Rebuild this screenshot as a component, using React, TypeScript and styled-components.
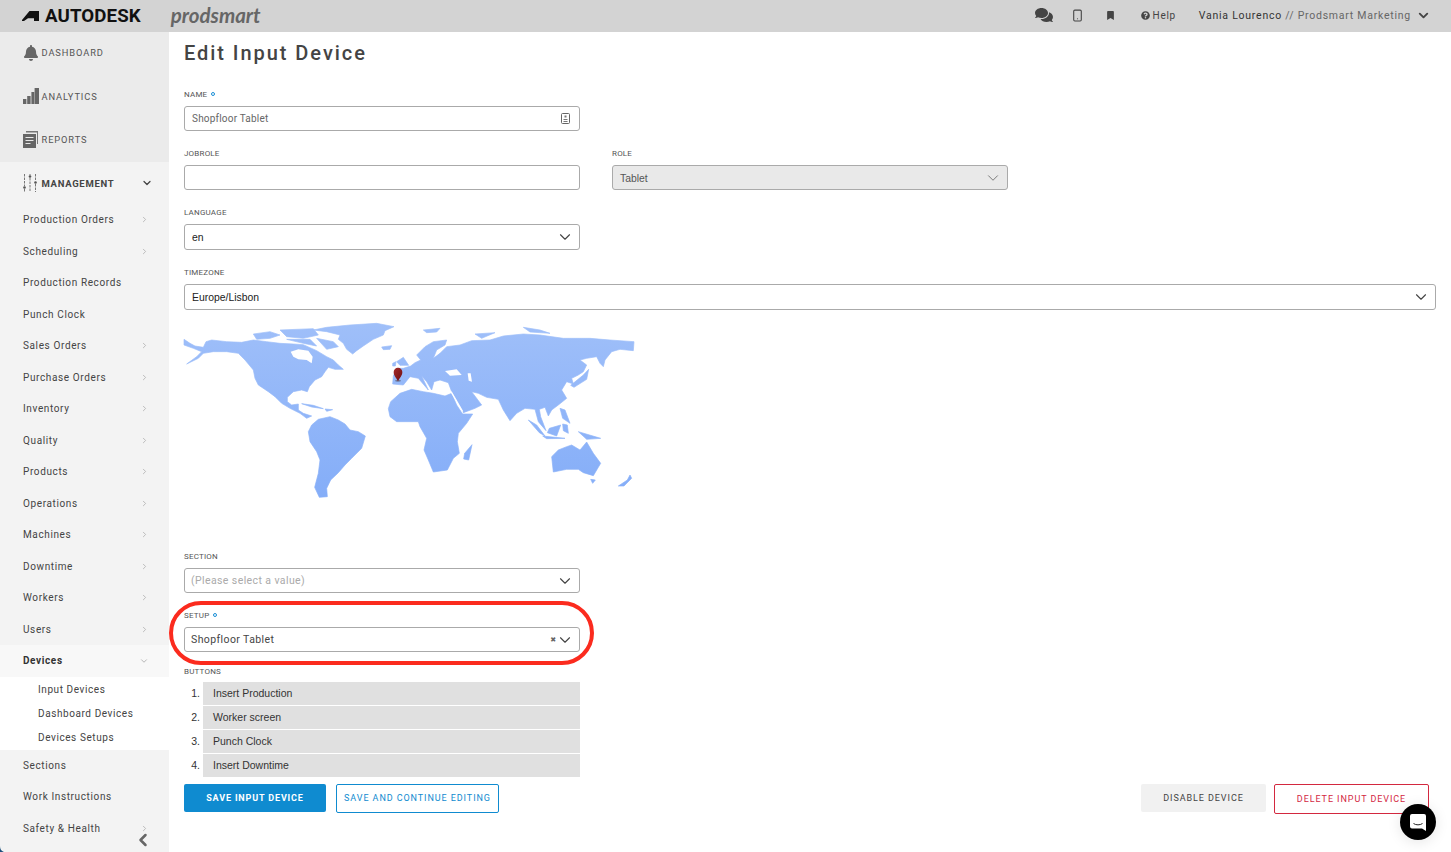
import React from "react";
import styled, { createGlobalStyle } from "styled-components";
import { FaBell, FaBookmark, FaComments, FaQuestionCircle } from "react-icons/fa";
import { FiChevronDown, FiChevronLeft, FiChevronRight, FiSmartphone } from "react-icons/fi";

const uiFont = `Roboto, "Noto Sans", sans-serif`;
const plainFont = `"Liberation Sans", Arial, sans-serif`;

const GlobalStyle = createGlobalStyle`
  html, body {
    margin: 0;
    height: 852px;
    overflow: hidden;
    background: #fff;
  }
  * { box-sizing: border-box; }
`;

const managementItems = [
  { label: "Production Orders", arrow: true },
  { label: "Scheduling", arrow: true },
  { label: "Production Records", arrow: false },
  { label: "Punch Clock", arrow: false },
  { label: "Sales Orders", arrow: true },
  { label: "Purchase Orders", arrow: true },
  { label: "Inventory", arrow: true },
  { label: "Quality", arrow: true },
  { label: "Products", arrow: true },
  { label: "Operations", arrow: true },
  { label: "Machines", arrow: true },
  { label: "Downtime", arrow: true },
  { label: "Workers", arrow: true },
  { label: "Users", arrow: true },
];

const deviceItems = ["Input Devices", "Dashboard Devices", "Devices Setups"];
const buttonItems = ["Insert Production", "Worker screen", "Punch Clock", "Insert Downtime"];

const AutodeskMark = () => (
  <svg width="17" height="10" viewBox="0 0 17 10">
    <path d="M0 10 L0 9 L7.5 0 L17 0 L17 10 L12 10 L12 7.2 L6 7.2 L2 10 Z" fill="#111" />
  </svg>
);

const BarsIcon = () => (
  <svg width="16" height="16" viewBox="0 0 16 16">
    <path d="M0 11h3.4v5H0zM4.2 8h3.4v8H4.2zM8.4 4h2.8v12H8.4zM11.6 0H16v16h-4.4z" fill="#666" />
  </svg>
);

const ReportsIcon = () => (
  <svg width="15" height="17" viewBox="0 0 15 17">
    <path d="M3 0h12v13h-1V1.5H3z" fill="#777" />
    <path d="M0 3h13v14H0z" fill="#666" />
    <path d="M2.5 6.5h8M2.5 9.5h8M2.5 12.5h5" stroke="#e8e8e8" strokeWidth="1.2" />
  </svg>
);

const SlidersIcon = () => (
  <svg width="14" height="18" viewBox="0 0 14 18">
    <path d="M1.5 0v12M1.5 15v3" stroke="#777" strokeWidth="1" strokeDasharray="2.5 1" />
    <path d="M7 0v1M7 4v14" stroke="#777" strokeWidth="1" strokeDasharray="2.5 1" />
    <path d="M12.5 0v7M12.5 10v8" stroke="#777" strokeWidth="1" strokeDasharray="2.5 1" />
    <circle cx="1.5" cy="13.5" r="1.3" fill="#555" />
    <circle cx="7" cy="2.5" r="1.3" fill="#555" />
    <circle cx="12.5" cy="8.5" r="1.3" fill="#555" />
  </svg>
);

const TabletGlyph = () => (
  <svg width="9" height="11" viewBox="0 0 9 11">
    <rect x="0.5" y="0.5" width="8" height="10" rx="1" fill="none" stroke="#666" />
    <path d="M3.5 2.5h2v2h-2zM2.5 6h4v1h-4zM2.5 8h4v1h-4z" fill="#777" />
  </svg>
);

const ChatGlyph = () => (
  <svg width="16" height="17" viewBox="0 0 16 17">
    <path d="M2 0h12a2 2 0 0 1 2 2v15l-4-2.6H2a2 2 0 0 1-2-2V2a2 2 0 0 1 2-2z" fill="#fff" />
    <path d="M3.5 9.5c2.5 1.8 6.5 1.8 9 0" fill="none" stroke="#222" strokeWidth="1" />
  </svg>
);

const landPaths = [
  // north america
  "M42 88 L60 100 L75 108 L100 112 L108 95 L125 90 L170 95 L215 97 L250 90 L290 95 L330 100 L370 102 L400 104 L440 122 L470 140 L490 150 L505 165 L520 178 L495 178 L475 172 L465 185 L455 200 L435 210 L418 230 L412 245 L395 240 L370 245 L352 262 L352 275 L365 285 L385 282 L385 300 L400 310 L425 318 L410 325 L390 310 L360 295 L335 280 L315 260 L295 245 L265 225 L255 205 L250 180 L225 150 L205 130 L170 125 L130 125 L100 130 L85 145 L50 162 L80 140 L95 125 L70 115 L42 105 Z",
  // arctic islands
  "M250 72 L300 65 L330 75 L300 85 L260 88 Z",
  "M330 60 L430 56 L445 75 L400 85 L350 80 Z",
  "M350 88 L420 88 L440 108 L400 100 Z",
  "M440 85 L490 95 L505 110 L470 118 Z",
  // greenland, iceland
  "M430 60 L470 52 L540 45 L620 40 L672 50 L645 62 L640 75 L610 88 L580 108 L560 122 L548 132 L530 118 L520 100 L505 88 L510 75 L470 65 Z",
  "M635 111 L665 107 L660 118 L640 119 Z",
  // caribbean
  "M395 281 L430 286 L460 296 L425 291 Z",
  "M465 297 L488 299 L470 304 Z",
  // south america
  "M415 365 L425 345 L445 328 L480 320 L505 330 L525 342 L540 360 L565 365 L586 378 L575 415 L545 445 L525 465 L505 488 L482 510 L470 535 L472 560 L448 562 L434 532 L445 490 L450 450 L440 425 L420 395 Z",
  // africa
  "M655 296 L662 275 L690 250 L725 238 L760 245 L790 250 L825 258 L845 250 L860 285 L878 312 L908 312 L890 340 L865 370 L862 395 L868 430 L850 445 L832 480 L790 486 L775 450 L762 420 L770 385 L750 350 L745 335 L705 335 L680 335 L660 320 Z",
  // eurasia
  "M668 222 L670 198 L680 175 L700 175 L722 168 L735 158 L752 150 L740 135 L765 110 L790 95 L830 90 L825 105 L800 120 L790 145 L810 130 L830 110 L870 105 L905 92 L960 90 L1000 78 L1060 72 L1110 75 L1180 85 L1260 85 L1320 90 L1392 95 L1390 122 L1350 118 L1325 125 L1305 150 L1300 170 L1290 160 L1280 140 L1250 145 L1230 150 L1250 165 L1240 185 L1225 195 L1205 205 L1210 222 L1190 215 L1175 240 L1190 265 L1165 285 L1145 300 L1135 318 L1125 292 L1108 298 L1112 320 L1128 362 L1105 335 L1095 298 L1065 295 L1040 310 L1020 332 L1000 300 L985 268 L950 262 L925 250 L905 245 L935 285 L915 295 L880 308 L860 270 L845 245 L835 218 L810 210 L792 215 L785 240 L770 215 L755 198 L775 240 L745 205 L720 200 L700 225 Z",
  "M680 155 L700 142 L716 166 L690 166 Z",
  "M668 160 L678 155 L676 168 L668 168 Z",
  "M760 60 L810 55 L800 66 L770 68 Z",
  "M915 72 L975 68 L935 85 Z",
  "M1060 52 L1110 60 L1140 70 L1080 66 Z",
  // japan and south east asia
  "M1240 195 L1256 178 L1250 208 L1212 232 L1202 226 Z",
  "M1075 330 L1100 345 L1125 378 L1108 368 Z",
  "M1138 355 L1172 345 L1160 378 L1132 368 Z",
  "M1118 378 L1185 385 L1130 386 Z",
  "M1178 342 L1192 345 L1195 370 L1180 362 Z",
  "M1170 295 L1185 300 L1200 340 L1178 325 Z",
  "M1225 365 L1292 385 L1250 388 Z",
  // australia, new zealand, madagascar
  "M1145 440 L1165 420 L1190 410 L1205 405 L1230 420 L1250 396 L1270 430 L1292 460 L1270 497 L1240 488 L1225 478 L1190 478 L1150 486 Z",
  "M1262 508 L1276 510 L1268 520 Z",
  "M1345 528 L1372 510 L1380 495 L1385 505 L1362 528 Z",
  "M884 430 L906 404 L896 450 L881 447 Z",
];

const WorldMap = () => (
  <svg width="480" height="200" viewBox="0 0 1440 600">
    <defs>
      <linearGradient id="land" gradientUnits="userSpaceOnUse" x1="0" y1="40" x2="0" y2="565">
        <stop offset="0" stopColor="#9fbff9" />
        <stop offset="1" stopColor="#84adf8" />
      </linearGradient>
      <linearGradient id="pin" x1="0" y1="0" x2="1" y2="1">
        <stop offset="0" stopColor="#a52a2a" />
        <stop offset="1" stopColor="#6e0f12" />
      </linearGradient>
    </defs>
    <g fill="url(#land)" stroke="url(#land)" strokeWidth="2" strokeLinejoin="round">
      {landPaths.map((d) => (
        <path key={d} d={d} />
      ))}
    </g>
    {/* hudson bay, black sea, caspian, red sea */}
    <g fill="#fff">
      <path d="M362 125 L385 118 L415 122 L428 140 L425 160 L410 150 L385 148 L370 140 Z" />
      <path d="M825 183 L860 178 L875 195 L840 197 Z" />
      <path d="M893 190 L902 190 L906 215 L896 212 Z" />
    </g>
    <path d="M843 245 L878 305" stroke="#fff" strokeWidth="4" />
    <ellipse cx="684" cy="212" rx="9" ry="3" fill="#556" opacity="0.6" />
    <path d="M684 214 C680 204 671 198 671 186 A13 13 0 0 1 697 186 C697 198 688 204 684 214 Z" fill="url(#pin)" />
  </svg>
);

const App: React.FC = () => {
  return (
    <Page>
      <GlobalStyle />
      <TopBar>
        <Brand>
          <AutodeskMark />
          <AutodeskName>AUTODESK</AutodeskName>
          <ProdsmartName>prodsmart</ProdsmartName>
        </Brand>
        <TopActions>
          <TopIcon $width={33}><FaComments size={18} /></TopIcon>
          <TopIcon $width={33}><FiSmartphone size={13} /></TopIcon>
          <TopIcon $width={33}><FaBookmark size={9} /></TopIcon>
          <HelpLink><FaQuestionCircle size={9} />Help</HelpLink>
          <UserName>Vania Lourenco <UserOrg>// Prodsmart Marketing</UserOrg></UserName>
          <FiChevronDown size={15} strokeWidth={3} color="#444" />
        </TopActions>
      </TopBar>
      <Body>
        <Sidebar>
          <PrimaryGroup>
            <PrimaryRow>
              <PrimaryIcon><FaBell size={16} color="#666" /></PrimaryIcon>
              DASHBOARD
            </PrimaryRow>
            <PrimaryRow>
              <PrimaryIcon><BarsIcon /></PrimaryIcon>
              ANALYTICS
            </PrimaryRow>
            <PrimaryRow>
              <PrimaryIcon><ReportsIcon /></PrimaryIcon>
              REPORTS
            </PrimaryRow>
          </PrimaryGroup>
          <ManagementHeader>
            <PrimaryIcon><SlidersIcon /></PrimaryIcon>
            MANAGEMENT
            <HeaderChevron><FiChevronDown size={12} strokeWidth={2.5} /></HeaderChevron>
          </ManagementHeader>
          {managementItems.map((item) => (
            <NavRow key={item.label}>
              {item.label}
              {item.arrow && <RowArrow><FiChevronRight size={9} /></RowArrow>}
            </NavRow>
          ))}
          <DevicesRow>
            Devices
            <RowArrow><FiChevronDown size={10} /></RowArrow>
          </DevicesRow>
          <SubMenu>
            {deviceItems.map((item) => (
              <SubRow key={item}>{item}</SubRow>
            ))}
          </SubMenu>
          <NavRow>Sections</NavRow>
          <NavRow>Work Instructions</NavRow>
          <NavRow>
            Safety &amp; Health
            <RowArrow><FiChevronRight size={9} /></RowArrow>
          </NavRow>
          <CollapseToggle><FiChevronLeft size={20} strokeWidth={3} /></CollapseToggle>
        </Sidebar>
        <Main>
          <Title>Edit Input Device</Title>
          <Field $top={24}>
            <Label>NAME <RequiredDot /></Label>
            <Box $half>
              <NameValue>Shopfloor Tablet</NameValue>
              <TabletGlyph />
              <GlyphGap />
            </Box>
          </Field>
          <TwoColumns>
            <Field>
              <Label>JOBROLE</Label>
              <Box $half />
            </Field>
            <Field>
              <Label>ROLE</Label>
              <Box $half $disabled>
                <PlainValue $muted>Tablet</PlainValue>
                <FiChevronDown size={18} strokeWidth={1.3} color="#777" />
              </Box>
            </Field>
          </TwoColumns>
          <Field>
            <Label>LANGUAGE</Label>
            <Box $half $tall>
              <PlainValue>en</PlainValue>
              <FiChevronDown size={18} strokeWidth={1.5} color="#444" />
            </Box>
          </Field>
          <Field>
            <Label>TIMEZONE</Label>
            <Box $tall>
              <PlainValue>Europe/Lisbon</PlainValue>
              <FiChevronDown size={18} strokeWidth={1.5} color="#444" />
            </Box>
          </Field>
          <MapFrame><WorldMap /></MapFrame>
          <Field $top={40}>
            <Label>SECTION</Label>
            <Box $half>
              <SelectValue $placeholder>(Please select a value)</SelectValue>
              <FiChevronDown size={18} strokeWidth={1.5} color="#444" />
            </Box>
          </Field>
          <Field>
            <Label>SETUP <RequiredDot /></Label>
            <Box $half>
              <SelectValue>Shopfloor Tablet</SelectValue>
              <ClearMark>✖</ClearMark>
              <FiChevronDown size={18} strokeWidth={1.5} color="#444" />
            </Box>
          </Field>
          <ButtonsLabel>BUTTONS</ButtonsLabel>
          <ButtonList>
            {buttonItems.map((item, index) => (
              <ButtonRow key={item}>
                <ButtonIndex>{index + 1}.</ButtonIndex>
                <ButtonName>{item}</ButtonName>
              </ButtonRow>
            ))}
          </ButtonList>
          <Actions>
            <ActionGroup>
              <PrimaryButton>SAVE INPUT DEVICE</PrimaryButton>
              <OutlineButton>SAVE AND CONTINUE EDITING</OutlineButton>
            </ActionGroup>
            <ActionGroup>
              <GreyButton>DISABLE DEVICE</GreyButton>
              <DangerButton>DELETE INPUT DEVICE</DangerButton>
            </ActionGroup>
          </Actions>
        </Main>
      </Body>
      <Annotation />
      <ChatBubble><ChatGlyph /></ChatBubble>
      <CornerHint />
    </Page>
  );
};

const Page = styled.div`
  position: relative;
  width: 1451px;
  height: 852px;
  overflow: hidden;
  display: flex;
  flex-direction: column;
  font-family: ${uiFont};
  color: #444;
`;

const TopBar = styled.header`
  height: 32px;
  flex: none;
  display: flex;
  align-items: center;
  justify-content: space-between;
  padding: 0 20px 0 22px;
  background: #d3d3d3;
`;

const Brand = styled.div`
  display: flex;
  align-items: center;
`;

const AutodeskName = styled.span`
  margin-left: 6px;
  margin-bottom: 1px;
  font-family: Roboto, sans-serif;
  font-size: 18.7px;
  font-weight: 700;
  letter-spacing: 0.1px;
  color: #111;
`;

const ProdsmartName = styled.span`
  margin-left: 30px;
  margin-bottom: 3px;
  font-family: "Lato", sans-serif;
  font-size: 20.5px;
  font-style: italic;
  font-weight: 700;
  color: #666;
`;

const TopActions = styled.div`
  display: flex;
  align-items: center;
  padding-bottom: 2px;
`;

const TopIcon = styled.span<{ $width: number }>`
  width: ${({ $width }) => $width}px;
  display: flex;
  justify-content: center;
  color: #444;
`;

const HelpLink = styled.span`
  display: flex;
  align-items: center;
  gap: 3px;
  margin-left: 14px;
  font-size: 10px;
  letter-spacing: 0.7px;
  color: #444;
`;

const UserName = styled.span`
  margin-left: 23px;
  margin-right: 5px;
  font-size: 10.5px;
  letter-spacing: 0.75px;
  color: #333;
`;

const UserOrg = styled.span`
  color: #666;
`;

const Body = styled.div`
  flex: 1;
  display: flex;
  min-height: 0;
`;

const Sidebar = styled.nav`
  position: relative;
  width: 169px;
  flex: none;
  background: #f3f3f3;
  overflow: hidden;
`;

const PrimaryGroup = styled.div`
  height: 130px;
  background: #ebebeb;
`;

const PrimaryRow = styled.div`
  height: 43.4px;
  padding: 0 0 2px 23px;
  display: flex;
  align-items: center;
  font-size: 9.3px;
  letter-spacing: 0.9px;
  color: #555;
`;

const PrimaryIcon = styled.span`
  width: 18.5px;
  display: flex;
  justify-content: flex-start;
`;

const ManagementHeader = styled.div`
  height: 42px;
  padding-left: 23px;
  display: flex;
  align-items: center;
  font-size: 9.5px;
  font-weight: 700;
  letter-spacing: 0.7px;
  color: #444;
`;

const HeaderChevron = styled.span`
  margin-left: auto;
  margin-right: 16px;
  display: flex;
  color: #444;
`;

const NavRow = styled.div`
  height: 31.5px;
  padding-left: 23px;
  display: flex;
  align-items: center;
  font-size: 10px;
  letter-spacing: 0.62px;
  color: #444;
`;

const DevicesRow = styled(NavRow)`
  background: #f8f8f8;
  font-weight: 700;
  color: #333;
`;

const RowArrow = styled.span`
  margin-left: auto;
  margin-right: 20px;
  display: flex;
  color: #aaa;
`;

const SubMenu = styled.div`
  height: 73px;
  padding-top: 1px;
  background: #fff;
`;

const SubRow = styled.div`
  height: 24px;
  padding-left: 38px;
  display: flex;
  align-items: center;
  font-size: 10px;
  letter-spacing: 0.58px;
  color: #444;
`;

const CollapseToggle = styled.span`
  position: absolute;
  left: 133px;
  bottom: 2px;
  display: flex;
  color: #666;
`;

const Main = styled.main`
  flex: 1;
  min-width: 0;
  padding: 10px 15px 0;
`;

const Title = styled.h1`
  margin: 0;
  height: 22px;
  font-size: 20px;
  line-height: 22px;
  font-weight: 500;
  letter-spacing: 1.95px;
  color: #444;
`;

const Field = styled.div<{ $top?: number }>`
  margin-top: ${({ $top }) => $top ?? 16}px;
`;

const TwoColumns = styled.div`
  display: flex;
  gap: 32px;
`;

const Label = styled.div`
  height: 12px;
  margin-bottom: 6px;
  display: flex;
  align-items: center;
  gap: 4px;
  font-size: 8px;
  letter-spacing: 0.2px;
  color: #555;
`;

const RequiredDot = styled.span`
  width: 4px;
  height: 4px;
  border: 1px solid #1b8fd6;
  border-radius: 50%;
`;

const Box = styled.div<{ $half?: boolean; $tall?: boolean; $disabled?: boolean }>`
  width: ${({ $half }) => ($half ? "396px" : "1252px")};
  height: ${({ $tall }) => ($tall ? 26 : 25)}px;
  display: flex;
  align-items: center;
  padding: 0 5px 0 7px;
  border: 1px solid #aaa;
  border-radius: 3px;
  background: ${({ $disabled }) => ($disabled ? "#e9e9e9" : "#fff")};
`;

const NameValue = styled.span`
  flex: 1;
  font-size: 10px;
  letter-spacing: 0.2px;
  color: #666;
`;

const GlyphGap = styled.span`
  width: 4px;
`;

const PlainValue = styled.span<{ $muted?: boolean }>`
  flex: 1;
  padding-top: 1px;
  font-family: ${plainFont};
  font-size: 10.4px;
  color: ${({ $muted }) => ($muted ? "#555" : "#222")};
`;

const SelectValue = styled.span<{ $placeholder?: boolean }>`
  flex: 1;
  margin-left: -1px;
  font-size: 10.5px;
  letter-spacing: 0.4px;
  color: ${({ $placeholder }) => ($placeholder ? "#aaa" : "#444")};
`;

const ClearMark = styled.span`
  margin-right: 0;
  font-family: "DejaVu Sans", sans-serif;
  font-size: 7px;
  color: #666;
`;

const MapFrame = styled.div`
  height: 200px;
  margin: 0 0 0 -14px;
  line-height: 0;
`;

const ButtonsLabel = styled(Label)`
  margin: 13px 0 5px;
`;

const ButtonList = styled.ol`
  width: 396px;
  margin: 0;
  padding: 0;
  list-style: none;
`;

const ButtonRow = styled.li`
  height: 24px;
  display: flex;
  font-family: ${plainFont};
  font-size: 10.5px;
  color: #333;
`;

const ButtonIndex = styled.span`
  width: 19px;
  padding-right: 3px;
  line-height: 23px;
  text-align: right;
`;

const ButtonName = styled.span`
  flex: 1;
  height: 23px;
  padding-left: 10px;
  line-height: 23px;
  background: #e0e0e0;
`;

const Actions = styled.div`
  margin-top: 6px;
  padding-right: 7px;
  display: flex;
  align-items: flex-start;
  justify-content: space-between;
`;

const ActionGroup = styled.div`
  display: flex;
  gap: 10px;
`;

const BaseButton = styled.button`
  height: 28px;
  padding: 0;
  border: 0;
  border-radius: 2px;
  font-family: ${uiFont};
  font-size: 9px;
  letter-spacing: 0.92px;
`;

const PrimaryButton = styled(BaseButton)`
  width: 142px;
  background: #0f8bd0;
  font-weight: 700;
  letter-spacing: 0.85px;
  color: #fff;
`;

const OutlineButton = styled(BaseButton)`
  width: 163px;
  height: 29px;
  padding-bottom: 2px;
  border: 1px solid #0f8bd0;
  background: #fff;
  color: #0f8bd0;
`;

const GreyButton = styled(BaseButton)`
  width: 125px;
  margin-right: -2px;
  background: #f1f1f1;
  color: #444;
`;

const DangerButton = styled(BaseButton)`
  width: 155px;
  height: 30px;
  border: 1px solid #d3283f;
  background: #fff;
  color: #d3283f;
`;

const Annotation = styled.div`
  position: absolute;
  left: 169px;
  top: 601px;
  width: 425px;
  height: 64px;
  border: 4px solid #fb2b1e;
  border-radius: 32px;
  pointer-events: none;
`;

const ChatBubble = styled.div`
  position: absolute;
  left: 1400px;
  top: 804px;
  width: 36px;
  height: 36px;
  display: flex;
  align-items: center;
  justify-content: center;
  border-radius: 50%;
  background: #000;
  box-shadow: 0 2px 14px rgba(0, 0, 0, 0.1);
`;

const CornerHint = styled.div`
  position: absolute;
  left: 0;
  bottom: 0;
  width: 4px;
  height: 6px;
  background: #1d4f7c;
  clip-path: path("M0 0 C0 3 1 5 4 6 L0 6 Z");
`;

export default App;
